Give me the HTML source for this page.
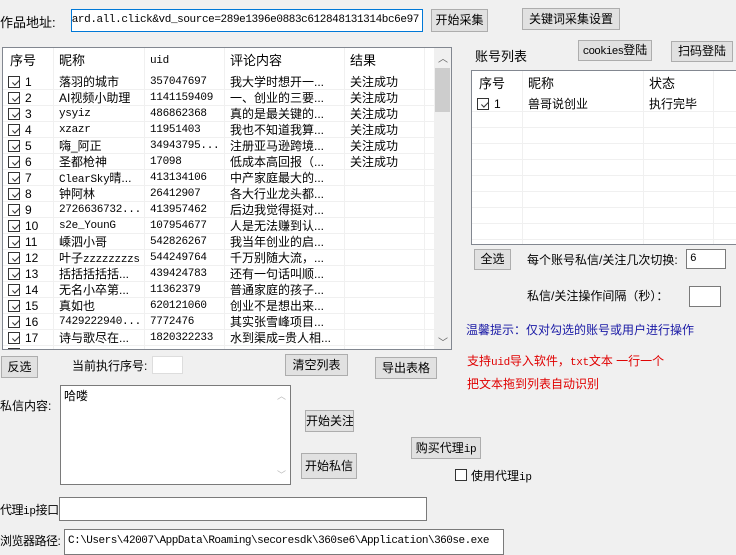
<!DOCTYPE html>
<html><head><meta charset="utf-8"><style>
*{box-sizing:border-box;margin:0;padding:0}
body{width:736px;height:552px;background:#f0f0f0;font-family:"Liberation Sans","Noto Sans CJK SC",sans-serif;font-size:12px;color:#000;position:relative;overflow:hidden}
.a{position:absolute;white-space:nowrap}
.btn{position:absolute;background:#e1e1e1;border:1px solid #adadad;text-align:center;font-size:12px;white-space:nowrap;overflow:hidden}
.inp{position:absolute;background:#fff;border:1px solid #7a7a7a;font-size:11px;font-family:"Liberation Mono","Noto Sans CJK SC",monospace;padding-left:3px;white-space:nowrap;overflow:hidden}
.tbl{position:absolute;background:#fff;border:1px solid #828790;overflow:hidden}
.row{position:absolute;left:0;height:16px;line-height:16px;border-bottom:1px solid #f0f0f0;width:100%}
.c{position:absolute;top:0;overflow:hidden;white-space:nowrap}
.cb{position:absolute;width:12px;height:12px;border:1px solid #333;background:#fff;top:2px}
.cb:after{content:"";position:absolute;left:2px;top:0px;width:6px;height:3px;border-left:1px solid #333;border-bottom:1px solid #333;transform:rotate(-45deg) translate(-1px,3px)}
.vl{position:absolute;top:0;bottom:0;width:1px;background:#f0f0f0}
.hd{position:absolute;top:0;left:0;width:100%;height:26px;line-height:26px;font-size:13px}
.m{font-family:"Liberation Mono","Noto Sans CJK SC",monospace;font-size:11px;letter-spacing:-0.3px}
</style></head><body>
<div class="a" style="left:0;top:12px;font-size:13px">作品地址:</div>
<div class="inp" style="left:71px;top:9px;width:352px;height:23px;line-height:21px;border-color:#0078d7;letter-spacing:-0.4px"><span style="position:absolute;right:3px;top:0">-card.all.click&amp;vd_source=289e1396e0883c612848131314bc6e97</span></div>
<div class="btn" style="left:431px;top:9px;width:57px;height:23px;line-height:21px">开始采集</div>
<div class="btn" style="left:522px;top:8px;width:98px;height:22px;line-height:20px">关键词采集设置</div>
<div class="btn" style="left:578px;top:40px;width:74px;height:21px;line-height:19px"><span class="m" style="letter-spacing:-0.8px">cookies</span>登陆</div>
<div class="btn" style="left:671px;top:41px;width:62px;height:21px;line-height:19px">扫码登陆</div>
<div class="a" style="left:475px;top:46px;font-size:13px">账号列表</div>

<div class="tbl" style="left:2px;top:47px;width:450px;height:303px">
<div class="vl" style="left:50px"></div><div class="vl" style="left:141px"></div><div class="vl" style="left:221px"></div><div class="vl" style="left:341px"></div><div class="vl" style="left:421px"></div>
<div class="hd"><span class="c" style="left:7px">序号</span><span class="c" style="left:56px">昵称</span><span class="c m" style="left:147px">uid</span><span class="c" style="left:227px">评论内容</span><span class="c" style="left:347px">结果</span></div>
<div style="position:absolute;left:0;top:26px;width:100%">
<div class="row" style="top:0"><span class="cb" style="left:5px"></span><span class="c" style="left:22px">1</span><span class="c" style="left:56px">落羽的城市</span><span class="c m" style="left:147px">357047697</span><span class="c" style="left:227px">我大学时想开一...</span><span class="c" style="left:347px">关注成功</span></div>
<div class="row" style="top:16px"><span class="cb" style="left:5px"></span><span class="c" style="left:22px">2</span><span class="c" style="left:56px">AI视频小助理</span><span class="c m" style="left:147px">1141159409</span><span class="c" style="left:227px">一、创业的三要...</span><span class="c" style="left:347px">关注成功</span></div>
<div class="row" style="top:32px"><span class="cb" style="left:5px"></span><span class="c" style="left:22px">3</span><span class="c m" style="left:56px">ysyiz</span><span class="c m" style="left:147px">486862368</span><span class="c" style="left:227px">真的是最关键的...</span><span class="c" style="left:347px">关注成功</span></div>
<div class="row" style="top:48px"><span class="cb" style="left:5px"></span><span class="c" style="left:22px">4</span><span class="c m" style="left:56px">xzazr</span><span class="c m" style="left:147px">11951403</span><span class="c" style="left:227px">我也不知道我算...</span><span class="c" style="left:347px">关注成功</span></div>
<div class="row" style="top:64px"><span class="cb" style="left:5px"></span><span class="c" style="left:22px">5</span><span class="c" style="left:56px">嗨_阿正</span><span class="c m" style="left:147px">34943795...</span><span class="c" style="left:227px">注册亚马逊跨境...</span><span class="c" style="left:347px">关注成功</span></div>
<div class="row" style="top:80px"><span class="cb" style="left:5px"></span><span class="c" style="left:22px">6</span><span class="c" style="left:56px">圣都枪神</span><span class="c m" style="left:147px">17098</span><span class="c" style="left:227px">低成本高回报（...</span><span class="c" style="left:347px">关注成功</span></div>
<div class="row" style="top:96px"><span class="cb" style="left:5px"></span><span class="c" style="left:22px">7</span><span class="c" style="left:56px"><span class="m">ClearSky</span>晴...</span><span class="c m" style="left:147px">413134106</span><span class="c" style="left:227px">中产家庭最大的...</span></div>
<div class="row" style="top:112px"><span class="cb" style="left:5px"></span><span class="c" style="left:22px">8</span><span class="c" style="left:56px">钟阿林</span><span class="c m" style="left:147px">26412907</span><span class="c" style="left:227px">各大行业龙头都...</span></div>
<div class="row" style="top:128px"><span class="cb" style="left:5px"></span><span class="c" style="left:22px">9</span><span class="c m" style="left:56px">2726636732...</span><span class="c m" style="left:147px">413957462</span><span class="c" style="left:227px">后边我觉得挺对...</span></div>
<div class="row" style="top:144px"><span class="cb" style="left:5px"></span><span class="c" style="left:22px">10</span><span class="c m" style="left:56px">s2e_YounG</span><span class="c m" style="left:147px">107954677</span><span class="c" style="left:227px">人是无法赚到认...</span></div>
<div class="row" style="top:160px"><span class="cb" style="left:5px"></span><span class="c" style="left:22px">11</span><span class="c" style="left:56px">嵊泗小哥</span><span class="c m" style="left:147px">542826267</span><span class="c" style="left:227px">我当年创业的启...</span></div>
<div class="row" style="top:176px"><span class="cb" style="left:5px"></span><span class="c" style="left:22px">12</span><span class="c" style="left:56px">叶子<span class="m">zzzzzzzzs</span></span><span class="c m" style="left:147px">544249764</span><span class="c" style="left:227px">千万别随大流，...</span></div>
<div class="row" style="top:192px"><span class="cb" style="left:5px"></span><span class="c" style="left:22px">13</span><span class="c" style="left:56px">括括括括括...</span><span class="c m" style="left:147px">439424783</span><span class="c" style="left:227px">还有一句话叫顺...</span></div>
<div class="row" style="top:208px"><span class="cb" style="left:5px"></span><span class="c" style="left:22px">14</span><span class="c" style="left:56px">无名小卒第...</span><span class="c m" style="left:147px">11362379</span><span class="c" style="left:227px">普通家庭的孩子...</span></div>
<div class="row" style="top:224px"><span class="cb" style="left:5px"></span><span class="c" style="left:22px">15</span><span class="c" style="left:56px">真如也</span><span class="c m" style="left:147px">620121060</span><span class="c" style="left:227px">创业不是想出来...</span></div>
<div class="row" style="top:240px"><span class="cb" style="left:5px"></span><span class="c" style="left:22px">16</span><span class="c m" style="left:56px">7429222940...</span><span class="c m" style="left:147px">7772476</span><span class="c" style="left:227px">其实张雪峰项目...</span></div>
<div class="row" style="top:256px"><span class="cb" style="left:5px"></span><span class="c" style="left:22px">17</span><span class="c" style="left:56px">诗与歌尽在...</span><span class="c m" style="left:147px">1820322233</span><span class="c" style="left:227px">水到渠成=贵人相...</span></div>
<div class="row" style="top:272px"><span class="cb" style="left:5px"></span></div>
</div>
<div style="position:absolute;left:431px;top:0;width:17px;height:301px;background:#f0f0f0"></div>
<div style="position:absolute;left:432px;top:20px;width:15px;height:44px;background:#cdcdcd"></div>
<div class="a" style="left:435px;top:2px;color:#606060;font-size:10px">︿</div>
<div class="a" style="left:435px;top:286px;color:#606060;font-size:10px">﹀</div>
</div>

<div class="tbl" style="left:471px;top:70px;width:270px;height:175px">
<div class="vl" style="left:50px"></div><div class="vl" style="left:171px"></div><div class="vl" style="left:241px"></div>
<div class="hd"><span class="c" style="left:7px">序号</span><span class="c" style="left:56px">昵称</span><span class="c" style="left:177px">状态</span></div>
<div style="position:absolute;left:0;top:25px;width:100%">
<div class="row" style="top:0"><span class="cb" style="left:5px"></span><span class="c" style="left:22px">1</span><span class="c" style="left:56px">兽哥说创业</span><span class="c" style="left:177px">执行完毕</span></div>
<div class="row" style="top:16px"></div><div class="row" style="top:32px"></div><div class="row" style="top:48px"></div><div class="row" style="top:64px"></div><div class="row" style="top:80px"></div><div class="row" style="top:96px"></div><div class="row" style="top:112px"></div><div class="row" style="top:128px"></div>
</div></div>

<div class="btn" style="left:474px;top:249px;width:37px;height:21px;line-height:19px">全选</div>
<div class="a" style="left:527px;top:251px">每个账号私信/关注几次切换:</div>
<div class="inp" style="left:686px;top:249px;width:40px;height:20px;line-height:18px">6</div>
<div class="a" style="left:527px;top:287px">私信/关注操作间隔（秒）：</div>
<div class="inp" style="left:689px;top:286px;width:32px;height:21px"></div>
<div class="a" style="left:466px;top:321px;color:#1a1aa6">温馨提示：仅对勾选的账号或用户进行操作</div>
<div class="a" style="left:467px;top:352px;color:#e00000">支持<span class="m">uid</span>导入软件，<span class="m">txt</span>文本 一行一个</div>
<div class="a" style="left:467px;top:375px;color:#e00000">把文本拖到列表自动识别</div>

<div class="btn" style="left:1px;top:356px;width:37px;height:22px;line-height:20px">反选</div>
<div class="a" style="left:72px;top:357px">当前执行序号:</div>
<div class="inp" style="left:152px;top:356px;width:31px;height:18px;border-color:#ddd"></div>
<div class="btn" style="left:285px;top:354px;width:63px;height:22px;line-height:20px">清空列表</div>
<div class="btn" style="left:375px;top:357px;width:62px;height:22px;line-height:20px">导出表格</div>

<div class="a" style="left:0;top:397px">私信内容:</div>
<div class="inp" style="left:60px;top:385px;width:231px;height:100px;font-family:'Noto Sans CJK SC',sans-serif;font-size:12px;padding:1px 3px">哈喽</div>
<div class="a" style="left:277px;top:389px;color:#bbb;font-size:9px">︿</div>
<div class="a" style="left:277px;top:468px;color:#bbb;font-size:9px">﹀</div>
<div class="btn" style="left:305px;top:410px;width:49px;height:22px;line-height:20px">开始关注</div>
<div class="btn" style="left:301px;top:453px;width:56px;height:26px;line-height:24px">开始私信</div>
<div class="btn" style="left:411px;top:437px;width:70px;height:22px;line-height:20px">购买代理<span class="m">ip</span></div>
<div class="a" style="left:455px;top:469px;width:12px;height:12px;border:1px solid #333;background:#fff"></div>
<div class="a" style="left:471px;top:467px">使用代理<span class="m">ip</span></div>

<div class="a" style="left:0;top:501px;letter-spacing:-0.5px">代理<span class="m">ip</span>接口:</div>
<div class="inp" style="left:59px;top:497px;width:368px;height:24px"></div>
<div class="a" style="left:0;top:532px;letter-spacing:-0.5px">浏览器路径:</div>
<div class="inp" style="left:64px;top:529px;width:440px;height:26px;line-height:22px;font-size:11px;letter-spacing:-0.5px">C:\Users\42007\AppData\Roaming\secoresdk\360se6\Application\360se.exe</div>
</body></html>
